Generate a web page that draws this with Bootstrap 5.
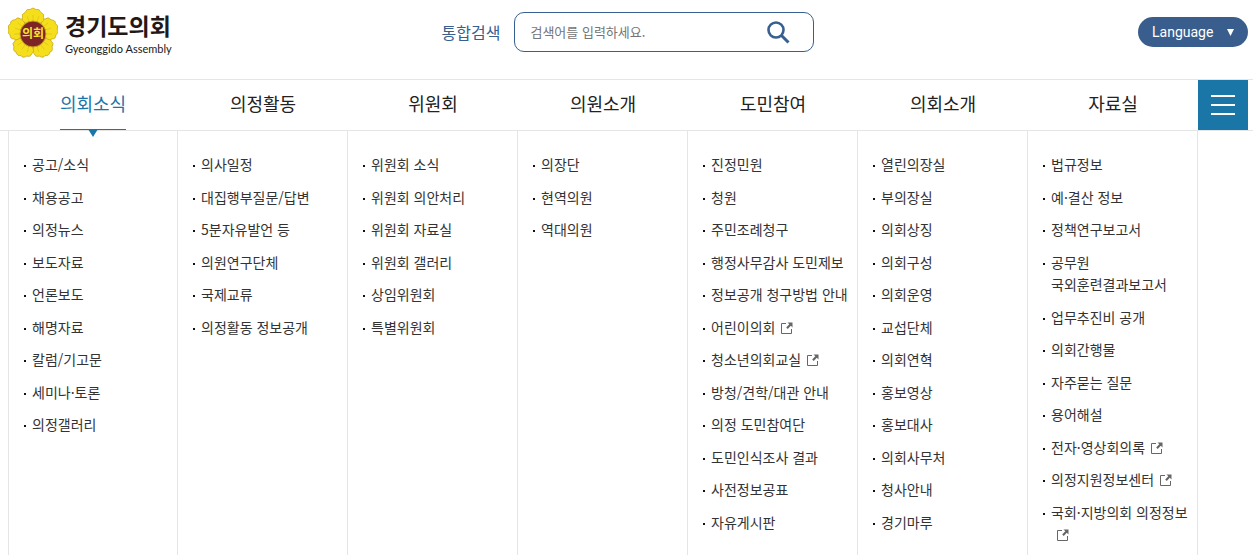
<!DOCTYPE html>
<html lang="ko">
<head>
<meta charset="utf-8">
<meta name="viewport" content="width=device-width, initial-scale=1">
<title>경기도의회</title>
<link href="https://cdn.jsdelivr.net/npm/bootstrap@5.3.0/dist/css/bootstrap.min.css" rel="stylesheet">
<style>
  body { font-family: "Noto Sans CJK KR", sans-serif; color: #333; background: #fff; word-break: keep-all; }
  a { color: inherit; text-decoration: none; }
  .site-head { height: 80px; padding: 0 5px 0 8px; border-bottom: 1px solid #e5e5e5; }
  .site-side { flex: 1 1 0; }
  .brand { gap: 7px; margin-top: 6px; color: #231815; }
  .brand-ko { font-size: 23px; font-weight: 700; line-height: 38px; }
  .brand-en { font-family: Lato, "Liberation Sans", sans-serif; font-size: 11px; line-height: 10px; }
  .find { margin-top: 12px; gap: 14px; }
  .find label { font-size: 16px; color: #375f8f; }
  .find-box { width: 300px; height: 40px; border: 1px solid #375f8f; border-radius: 10px; padding: 0 23px 0 15px; }
  .find-box input { font-size: 13px; background: none; outline: 0; color: #333; }
  .find-box input::placeholder { color: #757575; }
  .lang { margin-top: 17px; width: 110px; height: 30px; border-radius: 15px; background: #395e8d; color: #fff; padding: 0 14px; font: 14px/30px Roboto, sans-serif; }
  .main-nav { padding: 0 5px 0 8px; border-bottom: 1px solid #e5e5e5; height: 51px; }
  .main-nav li { flex: 1 1 0; }
  .main-nav li > a { display: inline-block; position: relative; height: 50px; line-height: 46px; font-size: 18px; font-weight: 400; color: #222; }
  .main-nav li > a.on { color: #1b76a8; border-bottom: 1px solid #1b76a8; }
  .main-nav li > a.on::after { content: ""; position: absolute; left: 50%; top: 100%; margin-left: -5px; border: 5px solid transparent; border-top: 8px solid #1b76a8; border-bottom: 0; }
  .all-btn { width: 50px; height: 50px; background: #1b76a8; }
  .sub-nav { padding: 0 55px 0 8px; grid-template-columns: repeat(7, minmax(0, 1fr)); }
  .sub-col { border-right: 1px solid #e5e5e5; padding: 22px 5px 6px 15px; font-size: 15px; line-height: 1.5; }
  .sub-col:first-child { border-left: 1px solid #e5e5e5; }
  .sub-col li { position: relative; padding-left: 8px; margin-bottom: 10px; }
  .sub-col li::before { content: ""; position: absolute; left: 0; top: 12px; width: 2px; height: 2px; background: #111; }
  .sub-col a { font-size: 14px; }
  .ext { width: 12px; height: 12px; margin-left: 6px; vertical-align: -1px; }
</style>
</head>
<body class="d-flex flex-column min-vh-100">
<svg class="d-none"><symbol id="ext" viewBox="0 0 12 12"><path d="M5 1.500H.5v10h10V7" fill="none" stroke="#666"/><path d="M6.500 .5H11.500V5.500L9.800 3.800 6.700 6.900 5.200 5.400 8.300 2.300z" fill="#666"/></symbol></svg>
<header class="site-head d-flex align-items-start">
  <div class="site-side">
    <a href="#" class="brand d-inline-flex align-items-start">
      <svg width="50" height="52" viewBox="0 0 50 52" aria-hidden="true">
        <defs><g id="petal"><path d="M0-6L-7-11Q-12-13-10.500-16.500Q-12-20-8-21.500Q-6-26-3-24.500Q0-27.500 3-24.500Q6-26 8-21.500Q12-20 10.500-16.500Q12-13 7-11z" fill="#f5df1c" stroke="#c9a21a" stroke-width=".7"/><path d="M0-12v-7M-4-13l-2-5M4-13l2-5" stroke="#e0c01c" stroke-width=".7"/></g></defs>
        <g transform="translate(25 28)">
          <use href="#petal" transform="rotate(144)"/><use href="#petal" transform="rotate(216)"/><use href="#petal" transform="rotate(72)"/><use href="#petal" transform="rotate(288)"/><use href="#petal"/>
          <circle r="13" fill="#7d2426" stroke="#c9a21a"/>
        </g>
        <text x="25" y="32" text-anchor="middle" font-size="12" font-weight="700" fill="#f6e32a">의회</text>
      </svg>
      <span class="d-flex flex-column"><span class="brand-ko">경기도의회</span><span class="brand-en">Gyeonggido Assembly</span></span>
    </a>
  </div>
  <form class="find d-flex align-items-center">
    <label for="q">통합검색</label>
    <div class="find-box d-flex align-items-center">
      <input id="q" type="text" class="border-0 p-0 flex-grow-1" placeholder="검색어를 입력하세요.">
      <button type="button" class="border-0 bg-transparent p-0 d-flex" aria-label="검색"><svg width="24" height="24" viewBox="0 0 24 24" fill="none" stroke="#375f8f"><circle cx="10" cy="10" r="7.500" stroke-width="2.600"/><path d="M15.500 15.500l7 7" stroke-width="3"/></svg></button>
    </div>
  </form>
  <div class="site-side d-flex justify-content-end">
    <button type="button" class="lang border-0 d-flex justify-content-between align-items-center">Language <svg width="7" height="7" viewBox="0 0 7 7"><path d="M0 0h7L3.500 7z" fill="#fff"/></svg></button>
  </div>
</header>
<nav class="main-nav d-flex">
  <ul class="list-unstyled d-flex flex-grow-1 m-0 text-center">
    <li><a href="#" class="on">의회소식</a></li><li><a href="#">의정활동</a></li><li><a href="#">위원회</a></li><li><a href="#">의원소개</a></li><li><a href="#">도민참여</a></li><li><a href="#">의회소개</a></li><li><a href="#">자료실</a></li>
  </ul>
  <button type="button" class="all-btn border-0 p-0 d-flex align-items-center justify-content-center" aria-label="전체메뉴"><svg width="24" height="20" viewBox="0 0 24 20" fill="#fff"><path d="M0 0h24v2H0zM0 9h24v2H0zM0 18h24v2H0z"/></svg></button>
</nav>
<div class="sub-nav d-grid flex-grow-1">
  <ul class="sub-col list-unstyled m-0"><li><a href="#">공고/소식</a></li><li><a href="#">채용공고</a></li><li><a href="#">의정뉴스</a></li><li><a href="#">보도자료</a></li><li><a href="#">언론보도</a></li><li><a href="#">해명자료</a></li><li><a href="#">칼럼/기고문</a></li><li><a href="#">세미나·토론</a></li><li><a href="#">의정갤러리</a></li></ul>
  <ul class="sub-col list-unstyled m-0"><li><a href="#">의사일정</a></li><li><a href="#">대집행부질문/답변</a></li><li><a href="#">5분자유발언 등</a></li><li><a href="#">의원연구단체</a></li><li><a href="#">국제교류</a></li><li><a href="#">의정활동 정보공개</a></li></ul>
  <ul class="sub-col list-unstyled m-0"><li><a href="#">위원회 소식</a></li><li><a href="#">위원회 의안처리</a></li><li><a href="#">위원회 자료실</a></li><li><a href="#">위원회 갤러리</a></li><li><a href="#">상임위원회</a></li><li><a href="#">특별위원회</a></li></ul>
  <ul class="sub-col list-unstyled m-0"><li><a href="#">의장단</a></li><li><a href="#">현역의원</a></li><li><a href="#">역대의원</a></li></ul>
  <ul class="sub-col list-unstyled m-0"><li><a href="#">진정민원</a></li><li><a href="#">청원</a></li><li><a href="#">주민조례청구</a></li><li><a href="#">행정사무감사 도민제보</a></li><li><a href="#">정보공개 청구방법 안내</a></li><li><a href="#">어린이의회<svg class="ext"><use href="#ext"/></svg></a></li><li><a href="#">청소년의회교실<svg class="ext"><use href="#ext"/></svg></a></li><li><a href="#">방청/견학/대관 안내</a></li><li><a href="#">의정 도민참여단</a></li><li><a href="#">도민인식조사 결과</a></li><li><a href="#">사전정보공표</a></li><li><a href="#">자유게시판</a></li></ul>
  <ul class="sub-col list-unstyled m-0"><li><a href="#">열린의장실</a></li><li><a href="#">부의장실</a></li><li><a href="#">의회상징</a></li><li><a href="#">의회구성</a></li><li><a href="#">의회운영</a></li><li><a href="#">교섭단체</a></li><li><a href="#">의회연혁</a></li><li><a href="#">홍보영상</a></li><li><a href="#">홍보대사</a></li><li><a href="#">의회사무처</a></li><li><a href="#">청사안내</a></li><li><a href="#">경기마루</a></li></ul>
  <ul class="sub-col list-unstyled m-0"><li><a href="#">법규정보</a></li><li><a href="#">예·결산 정보</a></li><li><a href="#">정책연구보고서</a></li><li><a href="#">공무원 국외훈련결과보고서</a></li><li><a href="#">업무추진비 공개</a></li><li><a href="#">의회간행물</a></li><li><a href="#">자주묻는 질문</a></li><li><a href="#">용어해설</a></li><li><a href="#">전자·영상회의록<svg class="ext"><use href="#ext"/></svg></a></li><li><a href="#">의정지원정보센터<svg class="ext"><use href="#ext"/></svg></a></li><li><a href="#">국회·지방의회 의정정보<svg class="ext"><use href="#ext"/></svg></a></li></ul>
</div>
<script src="https://cdn.jsdelivr.net/npm/bootstrap@5.3.0/dist/js/bootstrap.bundle.min.js"></script>
</body>
</html>
